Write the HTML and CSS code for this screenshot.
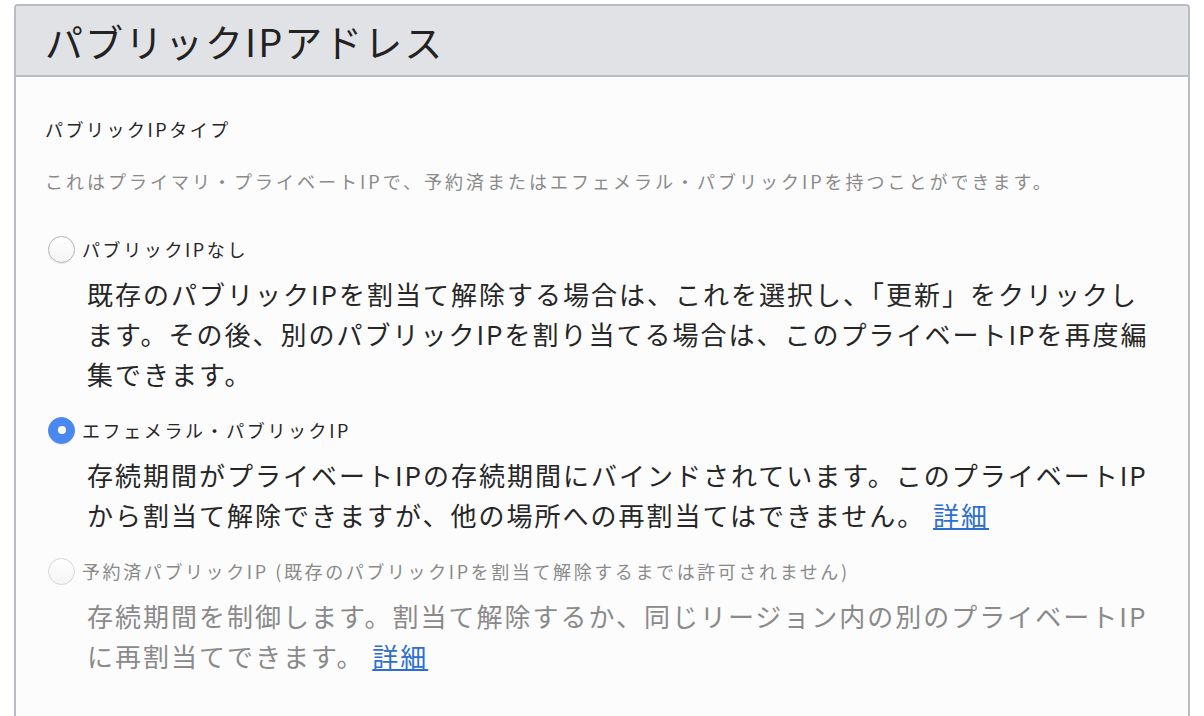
FILE: index.html
```html
<!DOCTYPE html>
<html lang="ja">

<head>
    <meta charset="utf-8" />
    <title>パブリックIPアドレス</title>
    <meta name="viewport" content="width=device-width, initial-scale=1" />
    <link rel="stylesheet" href="styles.css">
</head>

<body>
    <div class="panel">
        <div class="panel-head">
            <h1>パブリックIPアドレス</h1>
        </div>
        <div class="panel-body">
            <div class="field-label">パブリックIPタイプ</div>
            <p class="field-help">これはプライマリ・プライベートIPで、予約済またはエフェメラル・パブリックIPを持つことができます。</p>

            <div class="option">
                <label class="radio">
                    <input type="radio" name="iptype" value="none" />
                    <span class="dot"></span>
                    <span class="radio-text">パブリックIPなし</span>
                </label>
                <p class="option-desc">既存のパブリックIPを割当て解除する場合は、これを選択し、「更新」をクリックします。その後、別のパブリックIPを割り当てる場合は、このプライベートIPを再度編集できます。</p>
            </div>

            <div class="option">
                <label class="radio">
                    <input type="radio" name="iptype" value="ephemeral" checked />
                    <span class="dot"></span>
                    <span class="radio-text">エフェメラル・パブリックIP</span>
                </label>
                <p class="option-desc">存続期間がプライベートIPの存続期間にバインドされています。このプライベートIPから割当て解除できますが、他の場所への再割当てはできません。 <a href="#">詳細</a></p>
            </div>

            <div class="option disabled">
                <label class="radio">
                    <input type="radio" name="iptype" value="reserved" disabled />
                    <span class="dot"></span>
                    <span class="radio-text">予約済パブリックIP (既存のパブリックIPを割当て解除するまでは許可されません)</span>
                </label>
                <p class="option-desc">存続期間を制御します。割当て解除するか、同じリージョン内の別のプライベートIPに再割当てできます。 <a href="#">詳細</a></p>
            </div>
        </div>
    </div>
</body>

</html>
```

FILE: styles.css
```css
html {
    font-family: "Noto Sans CJK JP", "Noto Sans", sans-serif;
    color: #262626;
}

body {
    margin: 0;
    background-color: #ffffff;
}

.panel {
    margin: 4px 14px 0 14px;
    border: 2px solid #b9bcc2;
    border-bottom: none;
    border-radius: 4px 4px 0 0;
    background-color: #fcfcfc;
}

.panel-head {
    background-color: #e1e2e6;
    border-bottom: 2px solid #b9bcc2;
    border-radius: 3px 3px 0 0;
    height: 69px;
    padding: 0 29px;
    display: flex;
    align-items: center;
}

h1 {
    margin: 0;
    font-size: 38px;
    font-weight: normal;
    letter-spacing: 2px;
    color: #222;
}

.panel-body {
    padding: 40px 29px 40px 29px;
}

.field-label {
    font-size: 18px;
    line-height: 24px;
    letter-spacing: 2.5px;
}

.field-help {
    margin: 28px 0 0 0;
    font-size: 18px;
    line-height: 24px;
    letter-spacing: 3px;
    color: #8a8a8a;
}

.option {
    margin-top: 42px;
}

.option + .option {
    margin-top: 22px;
}

.radio {
    display: flex;
    align-items: center;
    gap: 7px;
    height: 28px;
    font-size: 18px;
    letter-spacing: 2.6px;
}

.radio input {
    display: none;
}

.dot {
    width: 25px;
    height: 25px;
    margin-left: 3px;
    border-radius: 50%;
    border: 1px solid #b4b4b4;
    background: linear-gradient(#ffffff, #f4f4f4);
    box-shadow: 0 1px 1px rgba(0, 0, 0, 0.08);
    display: flex;
    align-items: center;
    justify-content: center;
    flex-shrink: 0;
}

input:checked + .dot {
    border-color: #4a88f0;
    background: #4a88f0;
}

input:checked + .dot:before {
    content: "";
    width: 8px;
    height: 8px;
    border-radius: 50%;
    background-color: #ffffff;
}

.option-desc {
    margin: 11px 0 0 42px;
    font-size: 26px;
    line-height: 40px;
    letter-spacing: 2px;
}

.option-desc a {
    color: #2d6fd0;
}

.disabled .radio,
.disabled .option-desc {
    color: #8a8a8a;
}

.disabled .dot {
    border-color: #d6d6d6;
    box-shadow: none;
}
```
